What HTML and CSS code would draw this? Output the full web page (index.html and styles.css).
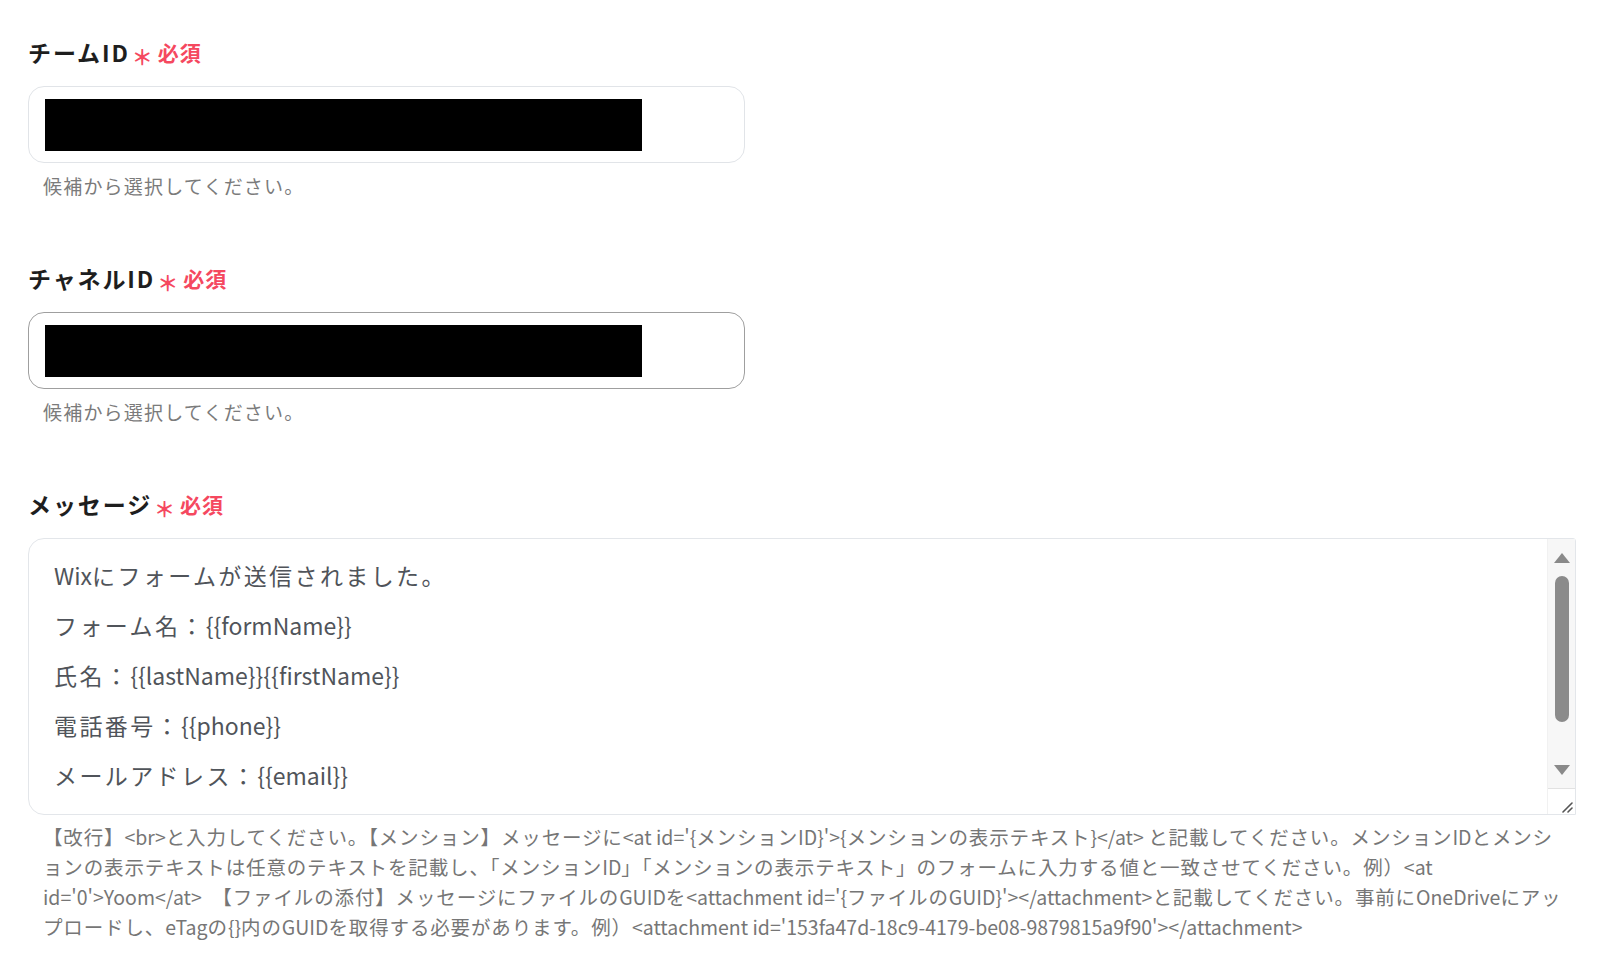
FILE: index.html
```html
<!DOCTYPE html>
<html lang="ja">
<head>
<meta charset="utf-8">
<title>Teams メッセージ設定</title>
<link rel="stylesheet" href="styles.css">
</head>
<body>
<main class="form">
  <section class="field">
    <div class="label">チームID<span class="req-mark">＊</span><span class="req">必須</span></div>
    <div class="input"><div class="redact"></div></div>
    <div class="hint">候補から選択してください。</div>
  </section>

  <section class="field">
    <div class="label">チャネルID<span class="req-mark">＊</span><span class="req">必須</span></div>
    <div class="input input-active"><div class="redact"></div></div>
    <div class="hint">候補から選択してください。</div>
  </section>

  <section class="field">
    <div class="label">メッセージ<span class="req-mark">＊</span><span class="req">必須</span></div>
    <div class="textarea">
      <div class="ta-content">
        <p>Wix<span class="ja">にフォームが送信されました。</span></p>
        <p><span class="ja">フォーム名：</span>{{formName}}</p>
        <p><span class="ja">氏名：</span>{{lastName}}{{firstName}}</p>
        <p><span class="ja">電話番号：</span>{{phone}}</p>
        <p><span class="ja">メールアドレス：</span>{{email}}</p>
      </div>
      <div class="ta-scroll">
        <div class="sb-btn"><span class="tri tri-up"></span></div>
        <div class="sb-thumb"></div>
        <div class="sb-btn sb-btn-down"><span class="tri tri-down"></span></div>
        <div class="resizer">
          <svg width="14" height="14" viewBox="0 0 14 14"><path d="M4 13 L13 4 M9 13 L13 9" stroke="#555" stroke-width="1.6" fill="none" stroke-linecap="round"/></svg>
        </div>
      </div>
    </div>
    <p class="help">【改行】<span class="en">&lt;br&gt;</span>と入力してください。【メンション】メッセージに<span class="en">&lt;at id='{</span>メンション<span class="en">ID}'&gt;{</span>メンションの表示テキスト<span class="en">}&lt;/at&gt; </span>と記載してください。メンション<span class="en">ID</span>とメンシ<br>ョンの表示テキストは任意のテキストを記載し、「メンション<span class="en">ID</span>」「メンションの表示テキスト」のフォームに入力する値と一致させてください。例）<span class="en">&lt;at</span><br><span class="en">id='0'&gt;Yoom&lt;/at&gt;</span>　【ファイルの添付】メッセージにファイルの<span class="en">GUID</span>を<span class="en">&lt;attachment id='{</span>ファイルの<span class="en">GUID}'&gt;&lt;/attachment&gt;</span>と記載してください。事前に<span class="en">OneDrive</span>にアッ<br>プロードし、<span class="en">eTag</span>の<span class="en">{}</span>内の<span class="en">GUID</span>を取得する必要があります。例）<span class="en">&lt;attachment id='153fa47d-18c9-4179-be08-9879815a9f90'&gt;&lt;/attachment&gt;</span></p>
  </section>
</main>
</body>
</html>
```
FILE: styles.css
```css
html, body {
  margin: 0;
  padding: 0;
  background: #ffffff;
}

body {
  font-family: "Noto Sans CJK JP", "Noto Sans", sans-serif;
  color: #222;
}

.form {
  padding: 38px 0 0 28px;
  display: flex;
  flex-direction: column;
  gap: 64px;
}

.field {
  display: flex;
  flex-direction: column;
  align-items: flex-start;
}

.label {
  font-size: 23px;
  font-weight: 700;
  line-height: 28px;
  height: 28px;
  color: #1e1e1e;
  letter-spacing: 1.9px;
  display: flex;
  align-items: center;
  white-space: nowrap;
}

.req-mark {
  color: #f5485f;
  font-size: 21px;
  font-weight: 700;
  margin-left: 2px;
  position: relative;
  top: 4px;
  letter-spacing: 0;
}

.req {
  color: #f5485f;
  font-size: 21px;
  font-weight: 700;
  margin-left: 5px;
  letter-spacing: 1px;
}

.input {
  margin-top: 20px;
  box-sizing: border-box;
  width: 717px;
  height: 77px;
  border: 1.5px solid #e1e4e8;
  border-radius: 16px;
  padding: 12px 0 0 16px;
  background: #fff;
}

.input-active {
  border-color: #9f9f9f;
}

.redact {
  width: 597px;
  height: 52px;
  background: #000;
}

.hint {
  margin-top: 9px;
  padding-left: 15px;
  font-size: 19px;
  line-height: 28px;
  letter-spacing: 1.2px;
  color: #7b7b7b;
  white-space: nowrap;
}

.textarea {
  margin-top: 20px;
  box-sizing: border-box;
  width: 1548px;
  height: 277px;
  border: 1px solid #e3e6ea;
  border-radius: 16px 3px 0 16px;
  display: flex;
  background: #fff;
}

.ta-content {
  flex: 1;
  padding: 11px 0 0 25px;
  font-size: 23px;
  line-height: 50px;
  color: #50545a;
}

.ta-content p {
  margin: 0;
  white-space: nowrap;
}

.ta-content .ja {
  letter-spacing: 2.4px;
}

.ta-scroll {
  width: 27px;
  background: #f7f7f7;
  border-left: 1px solid #f1f1f1;
  display: flex;
  flex-direction: column;
  align-items: center;
}

.sb-btn {
  height: 30px;
  width: 100%;
  display: flex;
  justify-content: center;
  align-items: flex-start;
}

.sb-btn .tri {
  margin-top: 14px;
}

.sb-btn-down {
  height: 53px;
}

.sb-btn-down .tri {
  margin-top: 43px;
}

.tri {
  width: 0;
  height: 0;
  border-left: 8px solid transparent;
  border-right: 8px solid transparent;
}

.tri-up {
  border-bottom: 10px solid #8a8a8a;
}

.tri-down {
  border-top: 10px solid #8a8a8a;
}

.sb-thumb {
  margin-top: 7px;
  width: 14px;
  height: 147px;
  border-radius: 7px;
  background: #8b8b8b;
}

.resizer {
  margin-top: 13px;
  align-self: stretch;
  height: 24px;
  background: #fff;
  border-top: 1px solid #e2e2e2;
  display: flex;
  justify-content: flex-end;
  align-items: flex-end;
  padding: 0 2px 1px 0;
}

.help {
  margin: 7px 0 0 15px;
  font-size: 19.5px;
  line-height: 30px;
  letter-spacing: 0.86px;
  color: #767676;
  white-space: nowrap;
}

.help .en {
  letter-spacing: 0;
}
```
